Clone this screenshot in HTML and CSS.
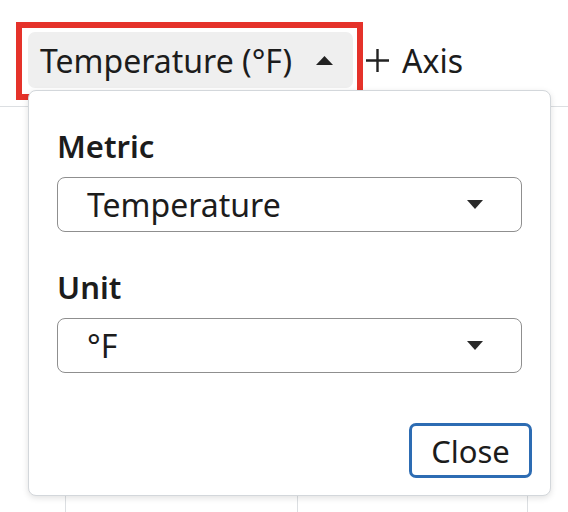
FILE: index.html
```html
<!DOCTYPE html>
<html>
<head>
<meta charset="utf-8">
<link rel="stylesheet" href="styles.css">
</head>
<body>
<div class="page">
  <div class="toolbar">
    <button class="axis-btn">
      <span>Temperature (°F)</span>
      <svg class="caret" width="17" height="9" viewBox="0 0 17 9"><path d="M0 9 L8.5 0 L17 9 Z" fill="#222"/></svg>
    </button>
    <button class="add-axis">
      <svg width="23" height="23" viewBox="0 0 23 23"><path d="M11.5 0 V23 M0 11.5 H23" stroke="#222" stroke-width="2.4" fill="none"/></svg>
      <span>Axis</span>
    </button>
  </div>
  <div class="grid">
    <div class="col col-a"></div>
    <div class="col col-b"></div>
    <div class="col col-c"></div>
  </div>

  <div class="highlight"></div>

  <div class="popover">
    <div class="fields">
      <div class="label">Metric</div>
      <div class="select">
        <span>Temperature</span>
        <svg width="16" height="9" viewBox="0 0 16 9"><path d="M0 0 H16 L8 9 Z" fill="#2a2a2a"/></svg>
      </div>
      <div class="label label-second">Unit</div>
      <div class="select">
        <span>°F</span>
        <svg width="16" height="9" viewBox="0 0 16 9"><path d="M0 0 H16 L8 9 Z" fill="#2a2a2a"/></svg>
      </div>
    </div>
    <div class="footer">
      <button class="close">Close</button>
    </div>
  </div>
</div>
</body>
</html>
```

FILE: styles.css
```css
* { box-sizing: border-box; }
html, body { margin: 0; padding: 0; background: #fff; }
body {
  font-family: "Noto Sans", "Open Sans", sans-serif;
  color: #1c1c1c;
  width: 568px;
  height: 512px;
  overflow: hidden;
}
.page { position: relative; width: 568px; height: 512px; }

.toolbar {
  display: flex;
  align-items: center;
  padding: 32px 0 0 28px;
  gap: 13px;
}
button { font-family: inherit; color: inherit; }
.axis-btn {
  display: flex;
  align-items: center;
  justify-content: space-between;
  width: 325px;
  height: 56px;
  padding: 0 20px 0 12px;
  background: #efefef;
  border: none;
  border-radius: 7px;
  font-size: 32px;
}
.caret { margin-top: 1px; }
.add-axis {
  display: flex;
  align-items: center;
  gap: 13px;
  border: none;
  background: none;
  padding: 0;
  font-size: 32px;
}

.grid {
  margin-top: 18px;
  border-top: 1px solid #dcdfe2;
  display: flex;
  padding-left: 65px;
  height: 420px;
}
.col {
  flex-shrink: 0;
  border-left: 1px solid #dcdfe2;
}
.col-a { width: 232px; }
.col-b { width: 230px; }
.col-c { width: 41px; }

.highlight {
  position: absolute;
  left: 16px;
  top: 22px;
  width: 347px;
  height: 78px;
  border: 6px solid #e5322a;
}

.popover {
  position: absolute;
  left: 28px;
  top: 90px;
  width: 523px;
  height: 406px;
  background: #fff;
  border: 1px solid #d3d7db;
  border-radius: 8px;
  box-shadow: 0 2px 6px rgba(0, 0, 0, 0.12);
  padding: 33px 18px 17px 28px;
  display: flex;
  flex-direction: column;
  justify-content: space-between;
}
.fields { padding-right: 10px; }
.label {
  font-weight: 600;
  font-size: 31px;
  line-height: 44px;
  margin-bottom: 9px;
}
.label-second { margin-top: 33px; }
.select {
  display: flex;
  align-items: center;
  justify-content: space-between;
  height: 55px;
  border: 1px solid #8f8f8f;
  border-radius: 8px;
  padding: 0 38px 0 29px;
  font-size: 32px;
}
.footer {
  display: flex;
  justify-content: flex-end;
}
.close {
  width: 123px;
  height: 55px;
  border: 3px solid #2d6cb3;
  border-radius: 7px;
  background: #fff;
  font-size: 31px;
  padding: 0;
}
```
